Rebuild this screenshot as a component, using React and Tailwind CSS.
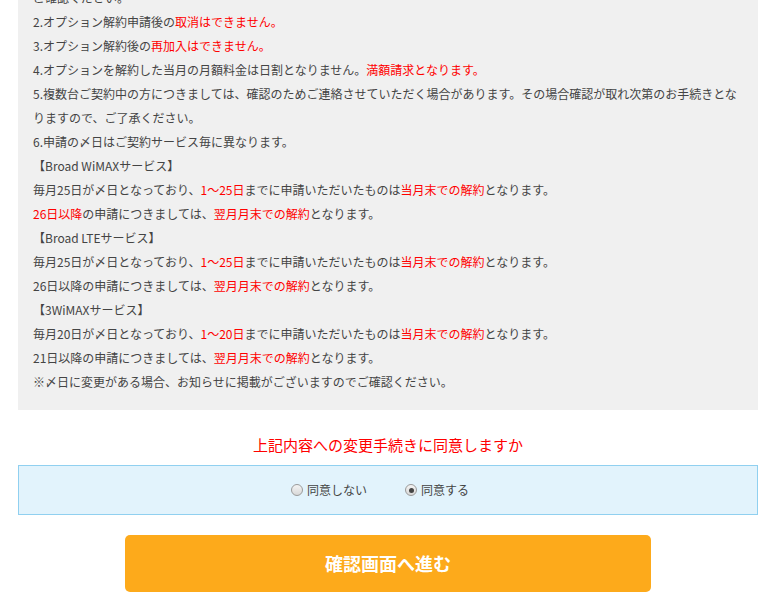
import { useState } from 'react';

const R = ({ children }) => <span className="text-[#ff0000]">{children}</span>;

const lines = [
  <>ご確認ください。</>,
  <>2.オプション解約申請後の<R>取消はできません。</R></>,
  <>3.オプション解約後の<R>再加入はできません。</R></>,
  <>4.オプションを解約した当月の月額料金は日割となりません。<R>満額請求となります。</R></>,
  <>5.複数台ご契約中の方につきましては、確認のためご連絡させていただく場合があります。その場合確認が取れ次第のお手続きとな</>,
  <>りますので、ご了承ください。</>,
  <>6.申請の〆日はご契約サービス毎に異なります。</>,
  <>【Broad WiMAXサービス】</>,
  <>毎月25日が〆日となっており、<R>1～25日</R>までに申請いただいたものは<R>当月末での解約</R>となります。</>,
  <><R>26日以降</R>の申請につきましては、<R>翌月月末での解約</R>となります。</>,
  <>【Broad LTEサービス】</>,
  <>毎月25日が〆日となっており、<R>1～25日</R>までに申請いただいたものは<R>当月末での解約</R>となります。</>,
  <>26日以降の申請につきましては、<R>翌月月末での解約</R>となります。</>,
  <>【3WiMAXサービス】</>,
  <>毎月20日が〆日となっており、<R>1～20日</R>までに申請いただいたものは<R>当月末での解約</R>となります。</>,
  <>21日以降の申請につきましては、<R>翌月月末での解約</R>となります。</>,
  <>※〆日に変更がある場合、お知らせに掲載がございますのでご確認ください。</>,
];

function Radio({ checked, label, onClick }) {
  return (
    <label onClick={onClick} className="flex items-center gap-[4px] cursor-pointer">
      <span className="w-[12px] h-[12px] rounded-full border border-[#9a9a9a] bg-gradient-to-b from-[#f4f4f4] to-[#d8d8d8] flex items-center justify-center">
        {checked && <span className="w-[5px] h-[5px] rounded-full bg-[#444]" />}
      </span>
      <span className="text-[12px] text-[#444]">{label}</span>
    </label>
  );
}

export default function App() {
  const [agree, setAgree] = useState(true);

  return (
    <div
      className="w-[780px] h-screen overflow-hidden bg-white"
      style={{ fontFamily: '"Noto Sans CJK JP", "Noto Sans", sans-serif' }}
    >
      <div className="ml-[18px] w-[740px]">
        <div className="bg-[#f0f0f0] mt-[-14px] pl-[15px] pr-[10px] pb-[16px] text-[12px] leading-[24px] text-[#444]">
          {lines.map((l, i) => (
            <div key={i} className="whitespace-nowrap">{l}</div>
          ))}
        </div>

        <p className="mt-[25px] text-center text-[15px] leading-[20px] text-[#ff0000]">
          上記内容への変更手続きに同意しますか
        </p>

        <div className="mt-[10px] h-[50px] border border-[#90d0f0] bg-[#e2f3fc] flex items-center justify-center gap-[38px] pr-[16px]">
          <Radio checked={!agree} label="同意しない" onClick={() => setAgree(false)} />
          <Radio checked={agree} label="同意する" onClick={() => setAgree(true)} />
        </div>

        <button className="block mx-auto mt-[20px] w-[526px] h-[57px] rounded-[5px] bg-[#fdaa1b] text-white text-[18px] font-bold">
          確認画面へ進む
        </button>
      </div>
    </div>
  );
}
